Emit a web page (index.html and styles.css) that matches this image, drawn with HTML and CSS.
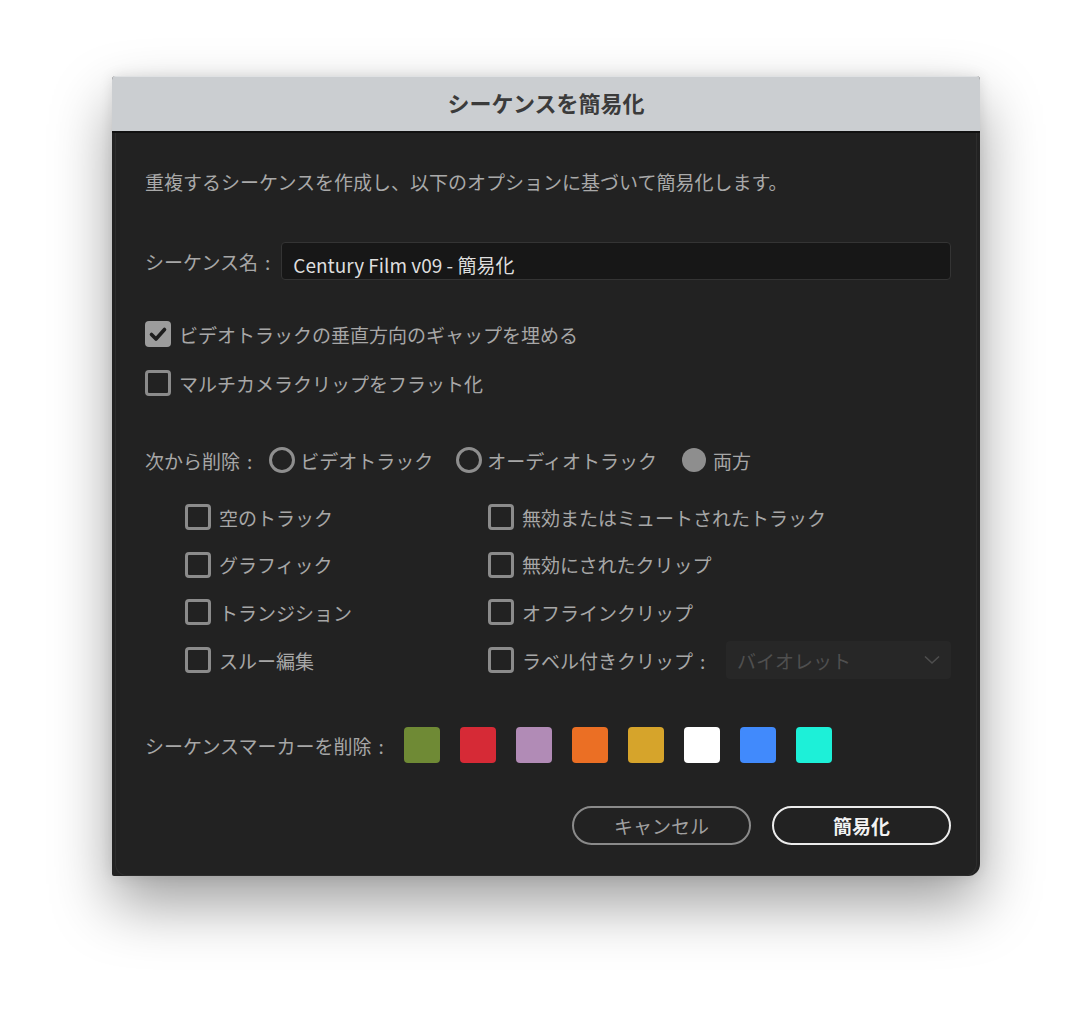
FILE: index.html
```html
<!DOCTYPE html>
<html lang="ja">
<head>
<meta charset="utf-8">
<title>シーケンスを簡易化</title>
<link rel="stylesheet" href="styles.css">
</head>
<body>
<div class="dialog">
  <div class="titlebar">シーケンスを簡易化</div>
  <div class="panel">
    <p class="desc">重複するシーケンスを作成し、以下のオプションに基づいて簡易化します。</p>

    <div class="name-row">
      <span class="label">シーケンス名<span class="colon">:</span></span>
      <div class="input">Century Film v09 - 簡易化</div>
    </div>

    <div class="options">
      <div class="check-row">
        <span class="cb checked"><svg viewBox="0 0 26 26" width="26" height="26"><path d="M6.5 13.5 L11 18 L19.5 8.5" fill="none" stroke="#1e1e1e" stroke-width="3.6" stroke-linecap="round" stroke-linejoin="round"/></svg></span>
        <span class="text">ビデオトラックの垂直方向のギャップを埋める</span>
      </div>
      <div class="check-row">
        <span class="cb"></span>
        <span class="text">マルチカメラクリップをフラット化</span>
      </div>
    </div>

    <div class="radio-row">
      <span class="label">次から削除<span class="colon">:</span></span>
      <span class="radio-item"><span class="radio"></span><span class="text">ビデオトラック</span></span>
      <span class="radio-item"><span class="radio"></span><span class="text">オーディオトラック</span></span>
      <span class="radio-item on"><span class="radio filled"></span><span class="text">両方</span></span>
    </div>

    <div class="grid">
      <div class="check-row"><span class="cb"></span><span class="text">空のトラック</span></div>
      <div class="check-row"><span class="cb"></span><span class="text">無効またはミュートされたトラック</span></div>
      <div class="check-row"><span class="cb"></span><span class="text">グラフィック</span></div>
      <div class="check-row"><span class="cb"></span><span class="text">無効にされたクリップ</span></div>
      <div class="check-row"><span class="cb"></span><span class="text">トランジション</span></div>
      <div class="check-row"><span class="cb"></span><span class="text">オフラインクリップ</span></div>
      <div class="check-row"><span class="cb"></span><span class="text">スルー編集</span></div>
      <div class="check-row">
        <span class="cb"></span><span class="text">ラベル付きクリップ<span class="colon">:</span></span>
        <div class="select">
          <span>バイオレット</span>
          <svg viewBox="0 0 16 10" width="16" height="10"><path d="M1 1.5 L8 8 L15 1.5" fill="none" stroke="#4e4e4e" stroke-width="1.6"/></svg>
        </div>
      </div>
    </div>

    <div class="marker-row">
      <span class="label">シーケンスマーカーを削除<span class="colon">:</span></span>
      <div class="swatches">
        <span class="sw sw-green"></span>
        <span class="sw sw-red"></span>
        <span class="sw sw-purple"></span>
        <span class="sw sw-orange"></span>
        <span class="sw sw-gold"></span>
        <span class="sw sw-white"></span>
        <span class="sw sw-blue"></span>
        <span class="sw sw-teal"></span>
      </div>
    </div>

    <div class="buttons">
      <button class="btn cancel">キャンセル</button>
      <button class="btn primary">簡易化</button>
    </div>
  </div>
</div>
</body>
</html>
```

FILE: styles.css
```css
html, body {
  margin: 0;
  padding: 0;
  background: #ffffff;
}
body {
  width: 1092px;
  height: 1024px;
  overflow: hidden;
  padding: 76px 0 0 112px;
  box-sizing: border-box;
  font-family: "Noto Sans CJK JP", "Noto Sans", sans-serif;
}
.dialog {
  width: 868px;
  height: 800px;
  background: #222222;
  border-radius: 4px 4px 12px 2px;
  box-shadow: 0 28px 60px rgba(0, 0, 0, 0.38), 0 0 14px rgba(0, 0, 0, 0.10);
  display: flex;
  flex-direction: column;
  overflow: hidden;
}
.titlebar {
  flex: none;
  background: #cbced1;
  border-top: 1px solid #dfe1e3;
  border-bottom: 2px solid #111111;
  box-sizing: border-box;
  height: 57px;
  display: flex;
  align-items: center;
  justify-content: center;
  font-size: 22px;
  font-weight: 700;
  color: #3b3b3b;
  padding-bottom: 4px;
}
.panel {
  flex: 1;
  margin: 0 3px 0 3px;
  border: 1px solid #2d2d2d;
  border-top: none;
  border-radius: 0 0 12px 12px;
  padding: 36px 25px 0 29px;
  color: #a7a7a7;
  font-size: 19px;
}
.desc {
  margin: 0;
  font-size: 19px;
  line-height: 26px;
  color: #a9a9a9;
}
.label {
  white-space: nowrap;
}
.colon {
  margin-left: 7px;
}
.name-row {
  margin-top: 47px;
  display: flex;
  align-items: center;
  gap: 11px;
}
.input {
  flex: 1;
  height: 38px;
  box-sizing: border-box;
  background: #171717;
  border: 1px solid #343434;
  border-radius: 4px;
  color: #dedede;
  font-size: 19px;
  padding: 7px 0 0 11px;
  line-height: 30px;
}
.options {
  margin-top: 41px;
  display: flex;
  flex-direction: column;
  gap: 23px;
}
.check-row {
  display: flex;
  align-items: center;
  gap: 8px;
  height: 26px;
}
.cb {
  width: 26px;
  height: 26px;
  box-sizing: border-box;
  border: 3px solid #8b8b8b;
  border-radius: 4px;
  flex: none;
  display: block;
}
.cb.checked {
  border: none;
  background: #9c9c9c;
}
.cb svg {
  display: block;
}
.text {
  white-space: nowrap;
}
.radio-row {
  margin-top: 51px;
  display: flex;
  align-items: center;
  height: 26px;
}
.radio-row .label {
  margin-right: 17px;
}
.radio-item {
  display: flex;
  align-items: center;
  gap: 5px;
  margin-right: 23px;
}
.radio-item.on {
  gap: 7px;
  margin-left: 2px;
}
.radio {
  width: 26px;
  height: 26px;
  box-sizing: border-box;
  border: 3px solid #8e8e8e;
  border-radius: 50%;
  display: block;
}
.radio.filled {
  width: 24px;
  height: 24px;
  border: none;
  background: #8e8e8e;
}
.grid {
  margin-top: 25px;
  margin-left: 40px;
  display: grid;
  grid-template-columns: 303px 1fr;
  grid-auto-rows: 38px;
  row-gap: 9.7px;
}
.grid .check-row {
  height: 38px;
}
.select {
  margin-left: auto;
  width: 225px;
  height: 38px;
  box-sizing: border-box;
  background: #272727;
  border-radius: 4px;
  display: flex;
  align-items: center;
  justify-content: space-between;
  padding: 0 11px 0 11px;
  color: #4f4f4f;
  font-size: 19px;
}
.marker-row {
  margin-top: 48px;
  display: flex;
  align-items: center;
  height: 36px;
}
.marker-row .label {
  width: 259px;
}
.swatches {
  display: flex;
  gap: 20px;
}
.sw {
  width: 36px;
  height: 36px;
  border-radius: 4px;
  display: block;
}
.sw-green { background: #6f8a35; }
.sw-red { background: #d62a36; }
.sw-purple { background: #b18bb6; }
.sw-orange { background: #eb6f24; }
.sw-gold { background: #d6a42b; }
.sw-white { background: #ffffff; }
.sw-blue { background: #418afc; }
.sw-teal { background: #1df0d8; }
.buttons {
  margin-top: 43px;
  display: flex;
  justify-content: flex-end;
  gap: 21px;
}
.btn {
  width: 179px;
  height: 39px;
  box-sizing: border-box;
  border-radius: 20px;
  background: transparent;
  font-family: "Noto Sans CJK JP", "Noto Sans", sans-serif;
  font-size: 19px;
  padding: 0;
  line-height: 1;
}
.btn.cancel {
  border: 2.5px solid #8a8a8a;
  color: #a0a0a0;
}
.btn.primary {
  border: 2.5px solid #ececec;
  color: #f2f2f2;
  font-weight: 700;
}
```
